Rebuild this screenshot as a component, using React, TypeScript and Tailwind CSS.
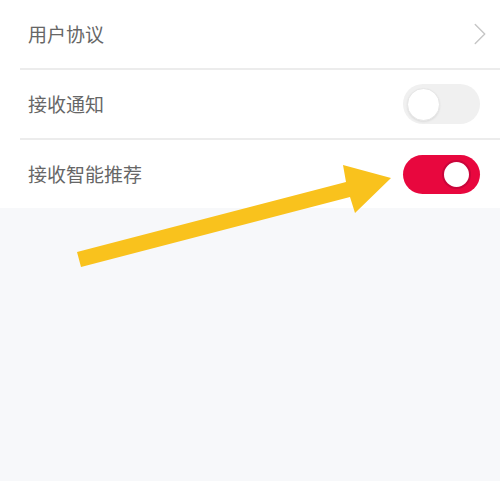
import { ChevronRight } from "lucide-react";

function Toggle({ on }: { on: boolean }) {
  if (on) {
    return (
      <div className="flex h-[39px] w-[77px] items-center justify-end rounded-full bg-[#e8073e] pr-[9px]">
        <div className="h-[29px] w-[29px] rounded-full border-2 border-[#c9053a] bg-white" />
      </div>
    );
  }
  return (
    <div className="flex h-[40px] w-[77px] items-center rounded-full bg-[#f0f0f0] pl-[4px]">
      <div className="h-[33px] w-[33px] rounded-full border border-[#e6e6e6] bg-white shadow-[0_1px_2px_rgba(0,0,0,0.08)]" />
    </div>
  );
}

function Row({ label, children }: { label: string; children: React.ReactNode }) {
  return (
    <div className="flex h-[68px] items-center justify-between pl-[28px] pr-[20px]">
      <span className="text-[19px] text-[#666666]">{label}</span>
      {children}
    </div>
  );
}

export default function App() {
  return (
    <div
      className="relative h-[481px] w-[500px] overflow-hidden bg-[#f7f8fa]"
      style={{ fontFamily: '"Noto Sans CJK SC", "Noto Sans", sans-serif' }}
    >
      <div className="bg-white">
        <Row label="用户协议">
          <ChevronRight className="mr-[-19px] h-[38px] w-[38px] text-[#c6c6c6]" strokeWidth={0.9} />
        </Row>
        <div className="ml-[20px] h-[2px] bg-[#ececec]" />
        <Row label="接收通知">
          <Toggle on={false} />
        </Row>
        <div className="ml-[20px] h-[2px] bg-[#ececec]" />
        <Row label="接收智能推荐">
          <Toggle on />
        </Row>
      </div>

      <svg className="absolute left-0 top-0" width="500" height="481" viewBox="0 0 500 481">
        <polygon
          points="77,252 346,182 343,165 391,178 355,213 350,197 81,267"
          fill="#f9c21d"
        />
      </svg>
    </div>
  );
}
